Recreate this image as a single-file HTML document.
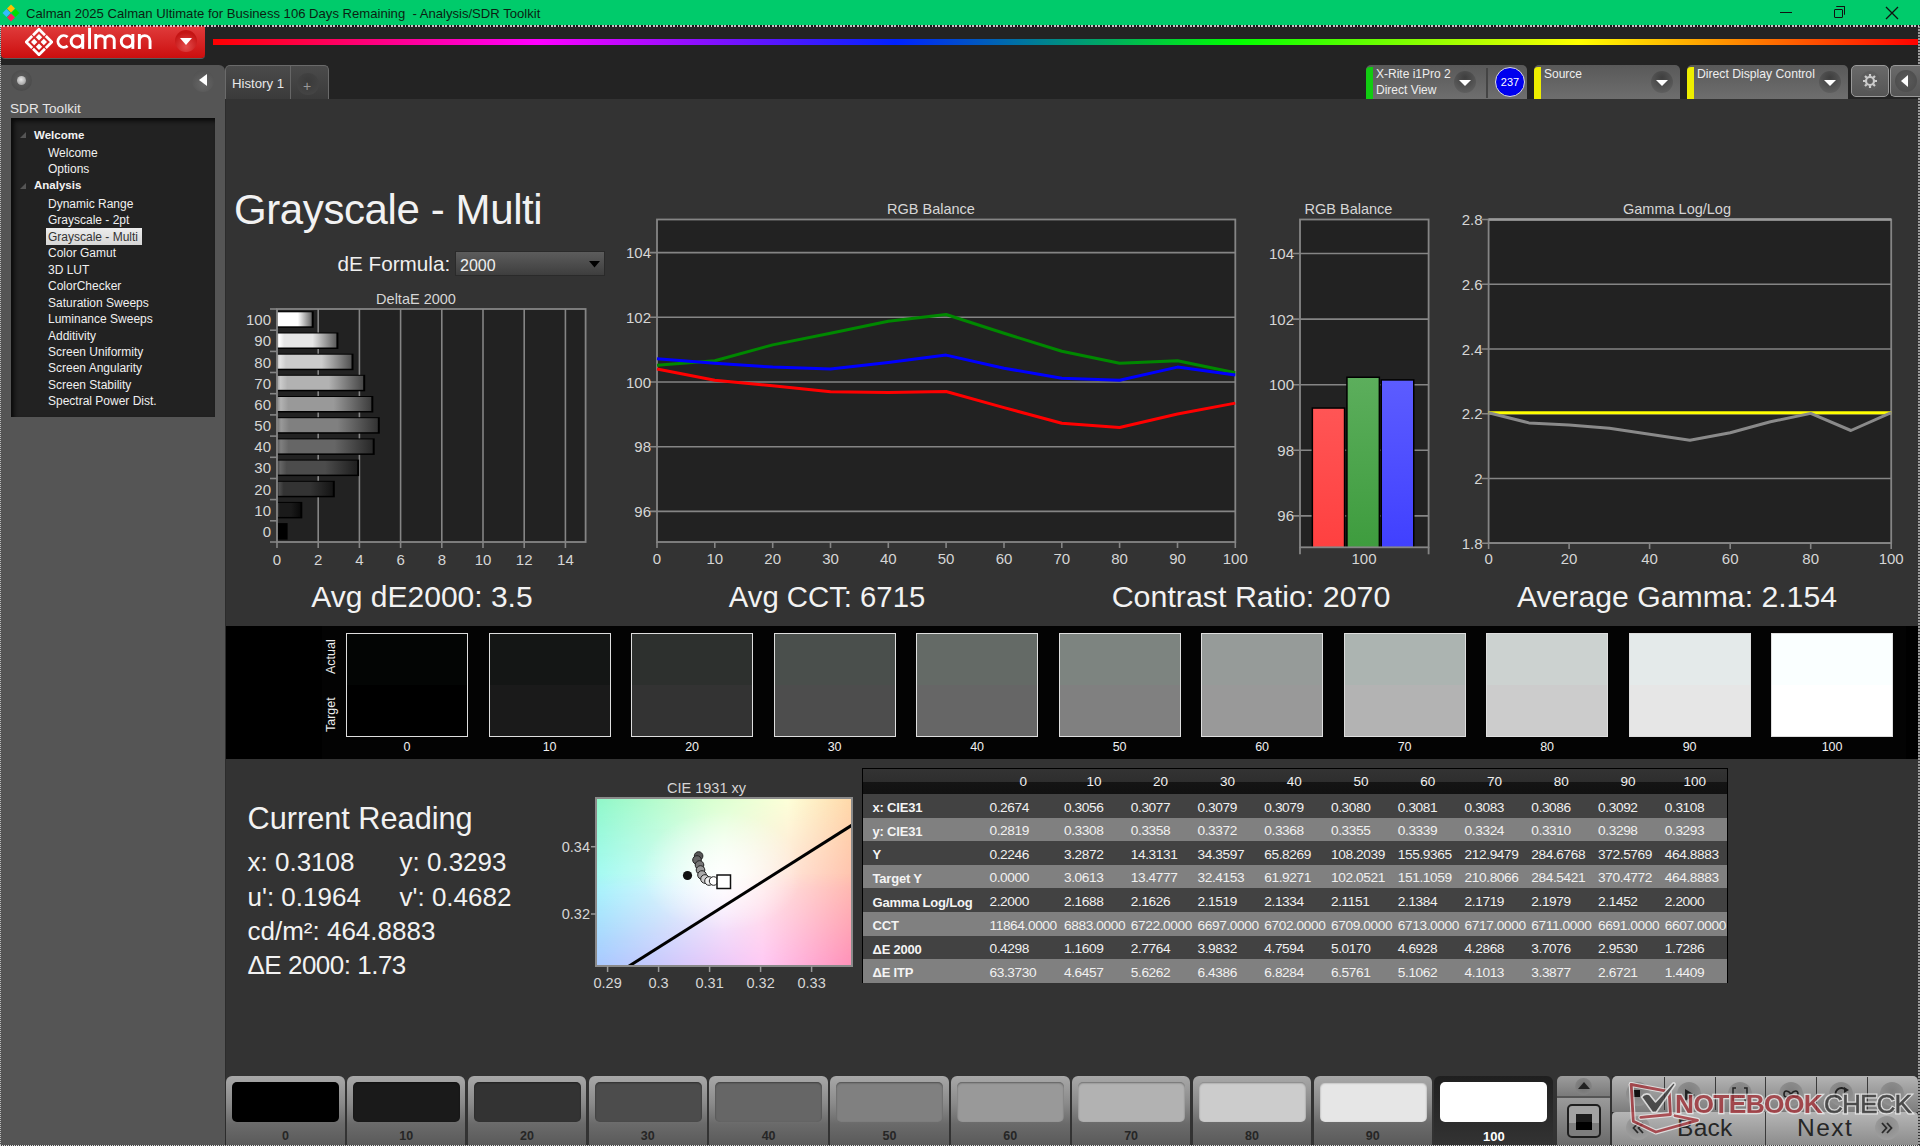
<!DOCTYPE html><html><head><meta charset="utf-8"><title>Calman</title><style>
*{margin:0;padding:0;box-sizing:border-box}
html,body{width:1920px;height:1146px;overflow:hidden;background:#232323;font-family:"Liberation Sans",sans-serif}
.a{position:absolute}
.t{position:absolute;white-space:nowrap;line-height:1}
</style></head><body>
<div class="a" style="left:0;top:0;width:1920px;height:25px;background:#00cb6b"></div>
<svg class="a" style="left:1px;top:3px" width="20" height="20" viewBox="0 0 20 20">
<path d="M10 1.5 L14 5.5 L10 9.5 L6 5.5Z" fill="#ffc000"/>
<path d="M5.5 6 L9.5 10 L5.5 14 L1.5 10Z" fill="#33bbff"/>
<path d="M14.5 6 L18.5 10 L14.5 14 L10.5 10Z" fill="#00dd00"/>
<path d="M10 10.5 L14 14.5 L10 18.5 L6 14.5Z" fill="#ff1f5a"/>
</svg>
<div class="t" style="left:26.0px;top:7.0px;font-size:13.1px;color:#0b1f12;">Calman 2025 Calman Ultimate for Business 106 Days Remaining &nbsp;- Analysis/SDR Toolkit</div>
<div class="a" style="left:1780px;top:12px;width:12px;height:1px;background:#111"></div>
<div class="a" style="left:1834px;top:9px;width:9px;height:9px;border:1px solid #111;border-radius:1px"></div>
<div class="a" style="left:1836px;top:6px;width:9px;height:9px;border-top:1px solid #111;border-right:1px solid #111;border-radius:1px"></div>
<svg class="a" style="left:1885px;top:6px" width="14" height="14"><path d="M1 1L13 13M13 1L1 13" stroke="#111" stroke-width="1.3"/></svg>
<div class="a" style="left:1px;top:26px;width:204px;height:32px;border-radius:0 0 4px 4px;background:linear-gradient(#e03c3c,#cc0e0e);box-shadow:0 1px 0 #5a5a5a"></div>
<svg class="a" style="left:25px;top:28px" width="28" height="28" viewBox="-14 -14 28 28">
<g fill="none" stroke="#fff" stroke-width="2.7" stroke-linejoin="miter">
<path d="M-6 -6.8 L0 -12.8 L6 -6.8"/><path d="M6.8 -6 L12.8 0 L6.8 6"/><path d="M6 6.8 L0 12.8 L-6 6.8"/><path d="M-6.8 6 L-12.8 0 L-6.8 -6"/>
</g>
<g fill="#fff"><path d="M0 -8 L3.2 -4.8 L0 -1.6 L-3.2 -4.8Z"/><path d="M4.8 -3.2 L8 0 L4.8 3.2 L1.6 0Z"/><path d="M0 1.6 L3.2 4.8 L0 8 L-3.2 4.8Z"/><path d="M-4.8 -3.2 L-1.6 0 L-4.8 3.2 L-8 0Z"/></g>
</svg>
<svg class="a" style="left:0;top:0" width="210" height="60"><g fill="none" stroke="#fff" stroke-width="2.9">
<path d="M67.6 37.1 A5.8 5.8 0 1 0 67.6 45.8"/>
<circle cx="76.95" cy="41.45" r="5.8"/><path d="M82.75 34 V48.9"/>
<path d="M89.55 27.8 V48.9"/>
<path d="M95.75 34 V48.9 M95.75 40.3 A4.62 4.62 0 0 1 105 40.3 V48.9 M105 40.3 A4.62 4.62 0 0 1 114.25 40.3 V48.9"/>
<circle cx="127.05" cy="41.45" r="5.8"/><path d="M132.85 34 V48.9"/>
<path d="M139.35 34 V48.9 M139.35 41 A5.35 5.35 0 0 1 150.05 41 V48.9"/>
</g></svg>
<div class="a" style="left:175px;top:30px;width:22px;height:22px;border-radius:50%;background:radial-gradient(circle at 50% 75%,#e44c4c,#c41414 70%)"></div>
<svg class="a" style="left:180px;top:38px" width="12" height="8"><path d="M0 0H12L6 7Z" fill="#fff"/></svg>
<div class="a" style="left:213px;top:39px;width:1707px;height:6px;background:linear-gradient(90deg,#ff0000 0%,#ff00ff 19%,#0022ff 40%,#00ff00 60%,#ffff00 80%,#ff0000 100%)"></div>
<div class="a" style="left:0;top:65px;width:225px;height:1081px;background:#555;border-radius:0 6px 0 0"></div>
<div class="a" style="left:10.5px;top:70px;width:21px;height:21px;border-radius:50%;background:radial-gradient(circle at 50% 45%,#5a5a5a 20%,#4a4a4a 75%,#5c5c5c 100%)"></div>
<div class="a" style="left:16.5px;top:75.5px;width:9px;height:9px;border-radius:50%;background:radial-gradient(circle at 45% 40%,#e8e8e8,#8a8a8a)"></div>
<div class="a" style="left:192px;top:70px;width:22px;height:22px;border-radius:50%;background:radial-gradient(circle at 50% 65%,#666,#4c4c4c)"></div>
<svg class="a" style="left:199px;top:74px" width="10" height="14"><path d="M8 0V12L0 6Z" fill="#fff"/></svg>
<div class="t" style="left:10.0px;top:101.6px;font-size:13.6px;color:#e6e6e6;">SDR Toolkit</div>
<div class="a" style="left:11px;top:118px;width:204px;height:299px;background:#222;box-shadow:inset 3px 3px 4px #0a0a0a"></div>
<svg class="a" style="left:20px;top:132.0px" width="6" height="6"><path d="M6 0V6H0Z" fill="#555"/></svg>
<div class="t" style="left:34.0px;top:129.8px;font-size:11.5px;color:#f2f2f2;font-weight:bold">Welcome</div>
<div class="t" style="left:48.0px;top:146.9px;font-size:12px;color:#f0f0f0;">Welcome</div>
<div class="t" style="left:48.0px;top:163.4px;font-size:12px;color:#f0f0f0;">Options</div>
<svg class="a" style="left:20px;top:182.5px" width="6" height="6"><path d="M6 0V6H0Z" fill="#555"/></svg>
<div class="t" style="left:34.0px;top:180.3px;font-size:11.5px;color:#f2f2f2;font-weight:bold">Analysis</div>
<div class="t" style="left:48.0px;top:197.9px;font-size:12px;color:#f0f0f0;">Dynamic Range</div>
<div class="t" style="left:48.0px;top:214.4px;font-size:12px;color:#f0f0f0;">Grayscale - 2pt</div>
<div class="a" style="left:46px;top:227.8px;width:96px;height:17px;background:linear-gradient(#ededed,#d6d6d6)"></div>
<div class="t" style="left:48.0px;top:230.9px;font-size:12px;color:#333;">Grayscale - Multi</div>
<div class="t" style="left:48.0px;top:247.4px;font-size:12px;color:#f0f0f0;">Color Gamut</div>
<div class="t" style="left:48.0px;top:263.9px;font-size:12px;color:#f0f0f0;">3D LUT</div>
<div class="t" style="left:48.0px;top:280.4px;font-size:12px;color:#f0f0f0;">ColorChecker</div>
<div class="t" style="left:48.0px;top:296.9px;font-size:12px;color:#f0f0f0;">Saturation Sweeps</div>
<div class="t" style="left:48.0px;top:313.4px;font-size:12px;color:#f0f0f0;">Luminance Sweeps</div>
<div class="t" style="left:48.0px;top:329.9px;font-size:12px;color:#f0f0f0;">Additivity</div>
<div class="t" style="left:48.0px;top:346.4px;font-size:12px;color:#f0f0f0;">Screen Uniformity</div>
<div class="t" style="left:48.0px;top:362.4px;font-size:12px;color:#f0f0f0;">Screen Angularity</div>
<div class="t" style="left:48.0px;top:378.9px;font-size:12px;color:#f0f0f0;">Screen Stability</div>
<div class="t" style="left:48.0px;top:395.4px;font-size:12px;color:#f0f0f0;">Spectral Power Dist.</div>
<div class="a" style="left:225px;top:65px;width:104px;height:34px;border-radius:5px 5px 0 0;background:linear-gradient(#4b4b4b,#3a3a3a);border:1px solid #6a6a6a;border-bottom:none"></div>
<div class="a" style="left:290px;top:66px;width:1px;height:33px;background:#666"></div>
<div class="t" style="left:232.0px;top:76.9px;font-size:13.2px;color:#e8e8e8;">History 1</div>
<div class="a" style="left:297px;top:73px;width:22px;height:22px;border-radius:50%;background:radial-gradient(circle at 50% 40%,#3a3a3a,#474747)"></div>
<div class="t" style="left:303.0px;top:79.2px;font-size:14px;color:#999;">+</div>
<div class="a" style="left:225px;top:99px;width:1px;height:1047px;background:#2c2c2c"></div>
<div class="a" style="left:226px;top:99px;width:1692px;height:1046px;background:#333"></div>
<div class="a" style="left:1918px;top:26px;width:2px;height:1120px;background:repeating-linear-gradient(#9a9a9a 0 2px,#333 2px 3px)"></div>
<div class="a" style="left:0;top:26px;width:1px;height:1120px;background:repeating-linear-gradient(#bbb 0 1px,#555 1px 2px)"></div>
<div class="a" style="left:1366px;top:65px;width:161px;height:34px;border-radius:5px 5px 0 0;background:linear-gradient(#595959,#6e6e6e)"></div>
<div class="a" style="left:1366px;top:67px;width:6.5px;height:32px;border-radius:4px 0 0 0;background:#11cc11"></div>
<div class="t" style="left:1376.0px;top:68.4px;font-size:12px;color:#eee;">X-Rite i1Pro 2</div>
<div class="t" style="left:1376.0px;top:84.4px;font-size:12px;color:#eee;">Direct View</div>
<div class="a" style="left:1454px;top:71px;width:22px;height:22px;border-radius:50%;background:radial-gradient(circle at 50% 30%,#3e3e3e,#666)"></div>
<svg class="a" style="left:1459px;top:80px" width="12" height="7"><path d="M0 0H12L6 6Z" fill="#fff"/></svg>
<div class="a" style="left:1486px;top:68px;width:1.5px;height:30px;background:#444"></div>
<div class="a" style="left:1495px;top:67px;width:30px;height:30px;border-radius:50%;background:#0000ee;border:1.5px solid #ddd"></div>
<div class="t" style="left:1498.0px;width:24px;text-align:center;top:76.8px;font-size:11px;color:#fff;">237</div>
<div class="a" style="left:1534px;top:65px;width:146px;height:34px;border-radius:5px 5px 0 0;background:linear-gradient(#595959,#6e6e6e)"></div>
<div class="a" style="left:1534px;top:67px;width:6.5px;height:32px;border-radius:4px 0 0 0;background:#eeee00"></div>
<div class="t" style="left:1544.0px;top:68.4px;font-size:12px;color:#eee;">Source</div>
<div class="a" style="left:1651px;top:71px;width:22px;height:22px;border-radius:50%;background:radial-gradient(circle at 50% 30%,#3e3e3e,#666)"></div>
<svg class="a" style="left:1656px;top:80px" width="12" height="7"><path d="M0 0H12L6 6Z" fill="#fff"/></svg>
<div class="a" style="left:1687px;top:65px;width:161px;height:34px;border-radius:5px 5px 0 0;background:linear-gradient(#595959,#6e6e6e)"></div>
<div class="a" style="left:1687px;top:67px;width:6.5px;height:32px;border-radius:4px 0 0 0;background:#eeee00"></div>
<div class="t" style="left:1697.0px;top:68.3px;font-size:12.2px;color:#eee;">Direct Display Control</div>
<div class="a" style="left:1819px;top:71px;width:22px;height:22px;border-radius:50%;background:radial-gradient(circle at 50% 30%,#3e3e3e,#666)"></div>
<svg class="a" style="left:1824px;top:80px" width="12" height="7"><path d="M0 0H12L6 6Z" fill="#fff"/></svg>
<div class="a" style="left:1851px;top:65px;width:38px;height:32px;border-radius:5px;background:linear-gradient(#6a6a6a,#555);border:1px solid #999"></div>
<svg class="a" style="left:1859px;top:70px" width="22" height="22" viewBox="0 0 22 22"><circle cx="11" cy="11" r="10" fill="#5e5e5e"/><g stroke="#ccc" stroke-width="2.2" fill="none"><circle cx="11" cy="11" r="4"/><path d="M11 4v2.5M11 15.5V18M4 11h2.5M15.5 11H18M6 6l1.8 1.8M14.2 14.2L16 16M16 6l-1.8 1.8M7.8 14.2L6 16"/></g></svg>
<div class="a" style="left:1890px;top:65px;width:30px;height:32px;border-radius:5px 0 0 5px;background:linear-gradient(#6a6a6a,#555);border:1px solid #999;border-right:none"></div>
<div class="a" style="left:1895px;top:70px;width:22px;height:22px;border-radius:50%;background:radial-gradient(#5a5a5a,#4a4a4a)"></div>
<svg class="a" style="left:1901px;top:75px" width="8" height="12"><path d="M7 0V12L0 6Z" fill="#fff"/></svg>
<div class="t" style="left:234.0px;top:188.7px;font-size:42px;color:#f2f2f2;letter-spacing:-0.4px">Grayscale - Multi</div>
<div class="t" style="left:337.5px;top:253.6px;font-size:20.7px;color:#f0f0f0;">dE Formula:</div>
<div class="a" style="left:455px;top:251px;width:150px;height:25px;background:linear-gradient(#5c5c5c,#3e3e3e);border:1px solid #2a2a2a"></div>
<div class="t" style="left:460.0px;top:257.6px;font-size:16px;color:#eee;">2000</div>
<svg class="a" style="left:589px;top:261px" width="12" height="7"><path d="M0 0H11L5.5 6.5Z" fill="#000"/></svg>
<svg class="a" style="left:0;top:0" width="1920" height="1146" font-family="Liberation Sans, sans-serif"><defs><linearGradient id="dg0" x1="0" x2="1" y1="0" y2="0"><stop offset="0" stop-color="rgb(0,0,0)"/><stop offset="0.04" stop-color="rgb(25,25,25)"/><stop offset="0.12" stop-color="rgb(0,0,0)"/><stop offset="0.6" stop-color="rgb(0,0,0)"/><stop offset="1" stop-color="rgb(0,0,0)"/></linearGradient><linearGradient id="dg1" x1="0" x2="1" y1="0" y2="0"><stop offset="0" stop-color="rgb(6,6,6)"/><stop offset="0.04" stop-color="rgb(51,51,51)"/><stop offset="0.12" stop-color="rgb(26,26,26)"/><stop offset="0.6" stop-color="rgb(26,26,26)"/><stop offset="1" stop-color="rgb(10,10,10)"/></linearGradient><linearGradient id="dg2" x1="0" x2="1" y1="0" y2="0"><stop offset="0" stop-color="rgb(31,31,31)"/><stop offset="0.04" stop-color="rgb(76,76,76)"/><stop offset="0.12" stop-color="rgb(51,51,51)"/><stop offset="0.6" stop-color="rgb(51,51,51)"/><stop offset="1" stop-color="rgb(20,20,20)"/></linearGradient><linearGradient id="dg3" x1="0" x2="1" y1="0" y2="0"><stop offset="0" stop-color="rgb(56,56,56)"/><stop offset="0.04" stop-color="rgb(101,101,101)"/><stop offset="0.12" stop-color="rgb(76,76,76)"/><stop offset="0.6" stop-color="rgb(76,76,76)"/><stop offset="1" stop-color="rgb(30,30,30)"/></linearGradient><linearGradient id="dg4" x1="0" x2="1" y1="0" y2="0"><stop offset="0" stop-color="rgb(82,82,82)"/><stop offset="0.04" stop-color="rgb(127,127,127)"/><stop offset="0.12" stop-color="rgb(102,102,102)"/><stop offset="0.6" stop-color="rgb(102,102,102)"/><stop offset="1" stop-color="rgb(40,40,40)"/></linearGradient><linearGradient id="dg5" x1="0" x2="1" y1="0" y2="0"><stop offset="0" stop-color="rgb(108,108,108)"/><stop offset="0.04" stop-color="rgb(153,153,153)"/><stop offset="0.12" stop-color="rgb(128,128,128)"/><stop offset="0.6" stop-color="rgb(128,128,128)"/><stop offset="1" stop-color="rgb(51,51,51)"/></linearGradient><linearGradient id="dg6" x1="0" x2="1" y1="0" y2="0"><stop offset="0" stop-color="rgb(133,133,133)"/><stop offset="0.04" stop-color="rgb(178,178,178)"/><stop offset="0.12" stop-color="rgb(153,153,153)"/><stop offset="0.6" stop-color="rgb(153,153,153)"/><stop offset="1" stop-color="rgb(61,61,61)"/></linearGradient><linearGradient id="dg7" x1="0" x2="1" y1="0" y2="0"><stop offset="0" stop-color="rgb(158,158,158)"/><stop offset="0.04" stop-color="rgb(203,203,203)"/><stop offset="0.12" stop-color="rgb(178,178,178)"/><stop offset="0.6" stop-color="rgb(178,178,178)"/><stop offset="1" stop-color="rgb(71,71,71)"/></linearGradient><linearGradient id="dg8" x1="0" x2="1" y1="0" y2="0"><stop offset="0" stop-color="rgb(184,184,184)"/><stop offset="0.04" stop-color="rgb(229,229,229)"/><stop offset="0.12" stop-color="rgb(204,204,204)"/><stop offset="0.6" stop-color="rgb(204,204,204)"/><stop offset="1" stop-color="rgb(81,81,81)"/></linearGradient><linearGradient id="dg9" x1="0" x2="1" y1="0" y2="0"><stop offset="0" stop-color="rgb(210,210,210)"/><stop offset="0.04" stop-color="rgb(255,255,255)"/><stop offset="0.12" stop-color="rgb(230,230,230)"/><stop offset="0.6" stop-color="rgb(230,230,230)"/><stop offset="1" stop-color="rgb(92,92,92)"/></linearGradient><linearGradient id="dg10" x1="0" x2="1" y1="0" y2="0"><stop offset="0" stop-color="rgb(235,235,235)"/><stop offset="0.04" stop-color="rgb(255,255,255)"/><stop offset="0.12" stop-color="rgb(255,255,255)"/><stop offset="0.6" stop-color="rgb(255,255,255)"/><stop offset="1" stop-color="rgb(102,102,102)"/></linearGradient><linearGradient id="rbR" x1="0" x2="0" y1="0" y2="1"><stop offset="0" stop-color="#ff5555"/><stop offset="1" stop-color="#ff4040"/></linearGradient><linearGradient id="rbG" x1="0" x2="0" y1="0" y2="1"><stop offset="0" stop-color="#5cae5c"/><stop offset="1" stop-color="#3e9c3e"/></linearGradient><linearGradient id="rbB" x1="0" x2="0" y1="0" y2="1"><stop offset="0" stop-color="#5c5cff"/><stop offset="1" stop-color="#4040ff"/></linearGradient></defs><rect x="277" y="309" width="308.6" height="233" fill="#222"/><line x1="318.2" y1="309" x2="318.2" y2="548" stroke="#858585" stroke-width="1.6"/><line x1="359.4" y1="309" x2="359.4" y2="548" stroke="#858585" stroke-width="1.6"/><line x1="400.6" y1="309" x2="400.6" y2="548" stroke="#858585" stroke-width="1.6"/><line x1="441.8" y1="309" x2="441.8" y2="548" stroke="#858585" stroke-width="1.6"/><line x1="483.0" y1="309" x2="483.0" y2="548" stroke="#858585" stroke-width="1.6"/><line x1="524.2" y1="309" x2="524.2" y2="548" stroke="#858585" stroke-width="1.6"/><line x1="565.4" y1="309" x2="565.4" y2="548" stroke="#858585" stroke-width="1.6"/><line x1="277" y1="548" x2="277" y2="542" stroke="#858585" stroke-width="1.6"/><text x="277.0" y="565.0" font-size="15" text-anchor="middle" fill="#d6d6d6" >0</text><text x="318.2" y="565.0" font-size="15" text-anchor="middle" fill="#d6d6d6" >2</text><text x="359.4" y="565.0" font-size="15" text-anchor="middle" fill="#d6d6d6" >4</text><text x="400.6" y="565.0" font-size="15" text-anchor="middle" fill="#d6d6d6" >6</text><text x="441.8" y="565.0" font-size="15" text-anchor="middle" fill="#d6d6d6" >8</text><text x="483.0" y="565.0" font-size="15" text-anchor="middle" fill="#d6d6d6" >10</text><text x="524.2" y="565.0" font-size="15" text-anchor="middle" fill="#d6d6d6" >12</text><text x="565.4" y="565.0" font-size="15" text-anchor="middle" fill="#d6d6d6" >14</text><rect x="277" y="523.1" width="10.6" height="16.5" fill="#000"/><rect x="277" y="524.1" width="8.6" height="14.0" fill="url(#dg0)"/><rect x="277" y="501.9" width="25.3" height="16.5" fill="#000"/><rect x="277" y="502.9" width="23.3" height="14.0" fill="url(#dg1)"/><rect x="277" y="480.8" width="57.8" height="16.5" fill="#000"/><rect x="277" y="481.8" width="55.8" height="14.0" fill="url(#dg2)"/><rect x="277" y="459.6" width="82.1" height="16.5" fill="#000"/><rect x="277" y="460.6" width="80.1" height="14.0" fill="url(#dg3)"/><rect x="277" y="438.4" width="97.7" height="16.5" fill="#000"/><rect x="277" y="439.4" width="95.7" height="14.0" fill="url(#dg4)"/><rect x="277" y="417.2" width="102.8" height="16.5" fill="#000"/><rect x="277" y="418.2" width="100.8" height="14.0" fill="url(#dg5)"/><rect x="277" y="396.0" width="96.3" height="16.5" fill="#000"/><rect x="277" y="397.0" width="94.3" height="14.0" fill="url(#dg6)"/><rect x="277" y="374.8" width="88.2" height="16.5" fill="#000"/><rect x="277" y="375.8" width="86.2" height="14.0" fill="url(#dg7)"/><rect x="277" y="353.7" width="76.5" height="16.5" fill="#000"/><rect x="277" y="354.7" width="74.5" height="14.0" fill="url(#dg8)"/><rect x="277" y="332.5" width="61.4" height="16.5" fill="#000"/><rect x="277" y="333.5" width="59.4" height="14.0" fill="url(#dg9)"/><rect x="277" y="311.3" width="36.7" height="16.5" fill="#000"/><rect x="277" y="312.3" width="34.7" height="14.0" fill="url(#dg10)"/><line x1="270" y1="309.0" x2="277" y2="309.0" stroke="#858585" stroke-width="1.6"/><line x1="270" y1="330.2" x2="277" y2="330.2" stroke="#858585" stroke-width="1.6"/><line x1="270" y1="351.4" x2="277" y2="351.4" stroke="#858585" stroke-width="1.6"/><line x1="270" y1="372.5" x2="277" y2="372.5" stroke="#858585" stroke-width="1.6"/><line x1="270" y1="393.7" x2="277" y2="393.7" stroke="#858585" stroke-width="1.6"/><line x1="270" y1="414.9" x2="277" y2="414.9" stroke="#858585" stroke-width="1.6"/><line x1="270" y1="436.1" x2="277" y2="436.1" stroke="#858585" stroke-width="1.6"/><line x1="270" y1="457.3" x2="277" y2="457.3" stroke="#858585" stroke-width="1.6"/><line x1="270" y1="478.5" x2="277" y2="478.5" stroke="#858585" stroke-width="1.6"/><line x1="270" y1="499.6" x2="277" y2="499.6" stroke="#858585" stroke-width="1.6"/><line x1="270" y1="520.8" x2="277" y2="520.8" stroke="#858585" stroke-width="1.6"/><line x1="270" y1="542.0" x2="277" y2="542.0" stroke="#858585" stroke-width="1.6"/><text x="271.0" y="536.9" font-size="15" text-anchor="end" fill="#d6d6d6" >0</text><text x="271.0" y="515.7" font-size="15" text-anchor="end" fill="#d6d6d6" >10</text><text x="271.0" y="494.5" font-size="15" text-anchor="end" fill="#d6d6d6" >20</text><text x="271.0" y="473.4" font-size="15" text-anchor="end" fill="#d6d6d6" >30</text><text x="271.0" y="452.2" font-size="15" text-anchor="end" fill="#d6d6d6" >40</text><text x="271.0" y="431.0" font-size="15" text-anchor="end" fill="#d6d6d6" >50</text><text x="271.0" y="409.8" font-size="15" text-anchor="end" fill="#d6d6d6" >60</text><text x="271.0" y="388.6" font-size="15" text-anchor="end" fill="#d6d6d6" >70</text><text x="271.0" y="367.5" font-size="15" text-anchor="end" fill="#d6d6d6" >80</text><text x="271.0" y="346.3" font-size="15" text-anchor="end" fill="#d6d6d6" >90</text><text x="271.0" y="325.1" font-size="15" text-anchor="end" fill="#d6d6d6" >100</text><rect x="277" y="309" width="308.6" height="233" fill="none" stroke="#858585" stroke-width="1.8"/><text x="416.0" y="303.5" font-size="14.5" text-anchor="middle" fill="#d6d6d6" >DeltaE 2000</text><rect x="657" y="219.5" width="578.3" height="322.5" fill="#222"/><line x1="650" y1="511.4" x2="1235.3" y2="511.4" stroke="#858585" stroke-width="1.6"/><text x="651.0" y="516.9" font-size="15" text-anchor="end" fill="#d6d6d6" >96</text><line x1="650" y1="446.7" x2="1235.3" y2="446.7" stroke="#858585" stroke-width="1.6"/><text x="651.0" y="452.2" font-size="15" text-anchor="end" fill="#d6d6d6" >98</text><line x1="650" y1="382.0" x2="1235.3" y2="382.0" stroke="#858585" stroke-width="1.6"/><text x="651.0" y="387.5" font-size="15" text-anchor="end" fill="#d6d6d6" >100</text><line x1="650" y1="317.3" x2="1235.3" y2="317.3" stroke="#858585" stroke-width="1.6"/><text x="651.0" y="322.8" font-size="15" text-anchor="end" fill="#d6d6d6" >102</text><line x1="650" y1="252.6" x2="1235.3" y2="252.6" stroke="#858585" stroke-width="1.6"/><text x="651.0" y="258.1" font-size="15" text-anchor="end" fill="#d6d6d6" >104</text><line x1="657.0" y1="542" x2="657.0" y2="548" stroke="#858585" stroke-width="1.6"/><text x="657.0" y="564.0" font-size="15" text-anchor="middle" fill="#d6d6d6" >0</text><line x1="714.8" y1="542" x2="714.8" y2="548" stroke="#858585" stroke-width="1.6"/><text x="714.8" y="564.0" font-size="15" text-anchor="middle" fill="#d6d6d6" >10</text><line x1="772.7" y1="542" x2="772.7" y2="548" stroke="#858585" stroke-width="1.6"/><text x="772.7" y="564.0" font-size="15" text-anchor="middle" fill="#d6d6d6" >20</text><line x1="830.5" y1="542" x2="830.5" y2="548" stroke="#858585" stroke-width="1.6"/><text x="830.5" y="564.0" font-size="15" text-anchor="middle" fill="#d6d6d6" >30</text><line x1="888.3" y1="542" x2="888.3" y2="548" stroke="#858585" stroke-width="1.6"/><text x="888.3" y="564.0" font-size="15" text-anchor="middle" fill="#d6d6d6" >40</text><line x1="946.1" y1="542" x2="946.1" y2="548" stroke="#858585" stroke-width="1.6"/><text x="946.1" y="564.0" font-size="15" text-anchor="middle" fill="#d6d6d6" >50</text><line x1="1004.0" y1="542" x2="1004.0" y2="548" stroke="#858585" stroke-width="1.6"/><text x="1004.0" y="564.0" font-size="15" text-anchor="middle" fill="#d6d6d6" >60</text><line x1="1061.8" y1="542" x2="1061.8" y2="548" stroke="#858585" stroke-width="1.6"/><text x="1061.8" y="564.0" font-size="15" text-anchor="middle" fill="#d6d6d6" >70</text><line x1="1119.6" y1="542" x2="1119.6" y2="548" stroke="#858585" stroke-width="1.6"/><text x="1119.6" y="564.0" font-size="15" text-anchor="middle" fill="#d6d6d6" >80</text><line x1="1177.5" y1="542" x2="1177.5" y2="548" stroke="#858585" stroke-width="1.6"/><text x="1177.5" y="564.0" font-size="15" text-anchor="middle" fill="#d6d6d6" >90</text><line x1="1235.3" y1="542" x2="1235.3" y2="548" stroke="#858585" stroke-width="1.6"/><text x="1235.3" y="564.0" font-size="15" text-anchor="middle" fill="#d6d6d6" >100</text><rect x="657" y="219.5" width="578.3" height="322.5" fill="none" stroke="#858585" stroke-width="1.8"/><polyline points="657.0,369.0 714.8,380.2 772.7,385.8 830.5,391.8 888.3,392.6 946.1,391.5 1004.0,407.6 1061.8,423.3 1119.6,427.5 1177.5,414.0 1235.3,403.1" fill="none" stroke="#ff0000" stroke-width="3" stroke-linejoin="round"/><polyline points="657.0,365.2 714.8,360.7 772.7,344.9 830.5,333.3 888.3,321.3 946.1,314.5 1004.0,333.3 1061.8,351.3 1119.6,363.3 1177.5,360.7 1235.3,372.7" fill="none" stroke="#008800" stroke-width="3" stroke-linejoin="round"/><polyline points="657.0,358.8 714.8,363.3 772.7,367.1 830.5,369.0 888.3,362.6 946.1,355.1 1004.0,368.2 1061.8,378.3 1119.6,380.2 1177.5,367.1 1235.3,375.0" fill="none" stroke="#0000ff" stroke-width="3" stroke-linejoin="round"/><text x="931.0" y="213.5" font-size="14.5" text-anchor="middle" fill="#d6d6d6" >RGB Balance</text><rect x="1300" y="219.5" width="128.5999999999999" height="327.79999999999995" fill="#222"/><line x1="1293" y1="515.9" x2="1428.6" y2="515.9" stroke="#858585" stroke-width="1.6"/><text x="1294.0" y="521.4" font-size="15" text-anchor="end" fill="#d6d6d6" >96</text><line x1="1293" y1="450.3" x2="1428.6" y2="450.3" stroke="#858585" stroke-width="1.6"/><text x="1294.0" y="455.8" font-size="15" text-anchor="end" fill="#d6d6d6" >98</text><line x1="1293" y1="384.7" x2="1428.6" y2="384.7" stroke="#858585" stroke-width="1.6"/><text x="1294.0" y="390.2" font-size="15" text-anchor="end" fill="#d6d6d6" >100</text><line x1="1293" y1="319.1" x2="1428.6" y2="319.1" stroke="#858585" stroke-width="1.6"/><text x="1294.0" y="324.6" font-size="15" text-anchor="end" fill="#d6d6d6" >102</text><line x1="1293" y1="253.5" x2="1428.6" y2="253.5" stroke="#858585" stroke-width="1.6"/><text x="1294.0" y="259.0" font-size="15" text-anchor="end" fill="#d6d6d6" >104</text><rect x="1311.6" y="407.3" width="33.7" height="140.0" fill="#000"/><rect x="1313.1" y="408.8" width="30.7" height="138.5" fill="url(#rbR)"/><rect x="1346.2" y="376.5" width="33.9" height="170.8" fill="#000"/><rect x="1347.7" y="378.0" width="30.9" height="169.3" fill="url(#rbG)"/><rect x="1380.5" y="379.2" width="34.0" height="168.1" fill="#000"/><rect x="1382.0" y="380.7" width="31.0" height="166.6" fill="url(#rbB)"/><rect x="1300" y="219.5" width="128.5999999999999" height="327.79999999999995" fill="none" stroke="#858585" stroke-width="1.8"/><line x1="1300" y1="547.3" x2="1300" y2="554.3" stroke="#858585" stroke-width="1.8"/><line x1="1428.6" y1="547.3" x2="1428.6" y2="554.3" stroke="#858585" stroke-width="1.8"/><text x="1364.0" y="564.0" font-size="15" text-anchor="middle" fill="#d6d6d6" >100</text><text x="1348.5" y="213.5" font-size="14.5" text-anchor="middle" fill="#d6d6d6" >RGB Balance</text><rect x="1488.6" y="219.5" width="402.60000000000014" height="323.5" fill="#222"/><line x1="1481.6" y1="543.2" x2="1891.2" y2="543.2" stroke="#858585" stroke-width="1.6"/><text x="1482.6" y="548.8" font-size="15" text-anchor="end" fill="#d6d6d6" >1.8</text><line x1="1481.6" y1="478.5" x2="1891.2" y2="478.5" stroke="#858585" stroke-width="1.6"/><text x="1482.6" y="484.0" font-size="15" text-anchor="end" fill="#d6d6d6" >2</text><line x1="1481.6" y1="413.7" x2="1891.2" y2="413.7" stroke="#858585" stroke-width="1.6"/><text x="1482.6" y="419.2" font-size="15" text-anchor="end" fill="#d6d6d6" >2.2</text><line x1="1481.6" y1="349.0" x2="1891.2" y2="349.0" stroke="#858585" stroke-width="1.6"/><text x="1482.6" y="354.5" font-size="15" text-anchor="end" fill="#d6d6d6" >2.4</text><line x1="1481.6" y1="284.2" x2="1891.2" y2="284.2" stroke="#858585" stroke-width="1.6"/><text x="1482.6" y="289.7" font-size="15" text-anchor="end" fill="#d6d6d6" >2.6</text><line x1="1481.6" y1="219.5" x2="1891.2" y2="219.5" stroke="#858585" stroke-width="1.6"/><text x="1482.6" y="225.0" font-size="15" text-anchor="end" fill="#d6d6d6" >2.8</text><line x1="1488.6" y1="543" x2="1488.6" y2="549" stroke="#858585" stroke-width="1.6"/><text x="1488.6" y="564.0" font-size="15" text-anchor="middle" fill="#d6d6d6" >0</text><line x1="1569.1" y1="543" x2="1569.1" y2="549" stroke="#858585" stroke-width="1.6"/><text x="1569.1" y="564.0" font-size="15" text-anchor="middle" fill="#d6d6d6" >20</text><line x1="1649.6" y1="543" x2="1649.6" y2="549" stroke="#858585" stroke-width="1.6"/><text x="1649.6" y="564.0" font-size="15" text-anchor="middle" fill="#d6d6d6" >40</text><line x1="1730.2" y1="543" x2="1730.2" y2="549" stroke="#858585" stroke-width="1.6"/><text x="1730.2" y="564.0" font-size="15" text-anchor="middle" fill="#d6d6d6" >60</text><line x1="1810.7" y1="543" x2="1810.7" y2="549" stroke="#858585" stroke-width="1.6"/><text x="1810.7" y="564.0" font-size="15" text-anchor="middle" fill="#d6d6d6" >80</text><line x1="1891.2" y1="543" x2="1891.2" y2="549" stroke="#858585" stroke-width="1.6"/><text x="1891.2" y="564.0" font-size="15" text-anchor="middle" fill="#d6d6d6" >100</text><rect x="1488.6" y="219.5" width="402.60000000000014" height="323.5" fill="none" stroke="#858585" stroke-width="1.8"/><line x1="1488.6" y1="219.5" x2="1891.2" y2="219.5" stroke="#9a9a9a" stroke-width="2.5"/><line x1="1488.6" y1="412.7" x2="1891.2" y2="412.7" stroke="#ffff00" stroke-width="3"/><polyline points="1488.6,412.7 1528.9,422.9 1569.1,424.9 1609.4,428.3 1649.6,434.3 1689.9,440.2 1730.2,432.7 1770.4,421.8 1810.7,413.4 1850.9,430.5 1891.2,412.7" fill="none" stroke="#8a8a8a" stroke-width="3" stroke-linejoin="round"/><text x="1677.0" y="213.5" font-size="14.5" text-anchor="middle" fill="#d6d6d6" >Gamma Log/Log</text><text x="422.0" y="607.0" font-size="30" text-anchor="middle" fill="#f2f2f2" >Avg dE2000: 3.5</text><text x="827.0" y="607.0" font-size="29.3" text-anchor="middle" fill="#f2f2f2" >Avg CCT: 6715</text><text x="1251.0" y="607.0" font-size="30.4" text-anchor="middle" fill="#f2f2f2" >Contrast Ratio: 2070</text><text x="1677.0" y="607.0" font-size="30.2" text-anchor="middle" fill="#f2f2f2" >Average Gamma: 2.154</text></svg>
<div class="a" style="left:226px;top:626px;width:1692px;height:133px;background:#000"></div>
<div class="a" style="left:322px;top:626px;width:1584px;height:133px;background:#030303"></div>
<div class="t" style="left:325px;top:674px;font-size:12.5px;color:#eee;transform:rotate(-90deg);transform-origin:0 0">Actual</div>
<div class="t" style="left:325px;top:732px;font-size:12.5px;color:#eee;transform:rotate(-90deg);transform-origin:0 0">Target</div>
<div class="a" style="left:346.1px;top:632.5px;width:122px;height:104px;border:1.6px solid #dedede;background:linear-gradient(rgb(3,5,4) 50%,rgb(0,0,0) 50%)"></div>
<div class="t" style="left:327.1px;width:160px;text-align:center;top:741.0px;font-size:12.5px;color:#f0f0f0;">0</div>
<div class="a" style="left:488.6px;top:632.5px;width:122px;height:104px;border:1.6px solid #dedede;background:linear-gradient(rgb(20,22,21) 50%,rgb(26,26,26) 50%)"></div>
<div class="t" style="left:469.6px;width:160px;text-align:center;top:741.0px;font-size:12.5px;color:#f0f0f0;">10</div>
<div class="a" style="left:631.1px;top:632.5px;width:122px;height:104px;border:1.6px solid #dedede;background:linear-gradient(rgb(45,48,46) 50%,rgb(51,51,51) 50%)"></div>
<div class="t" style="left:612.1px;width:160px;text-align:center;top:741.0px;font-size:12.5px;color:#f0f0f0;">20</div>
<div class="a" style="left:773.6px;top:632.5px;width:122px;height:104px;border:1.6px solid #dedede;background:linear-gradient(rgb(74,79,76) 50%,rgb(77,77,77) 50%)"></div>
<div class="t" style="left:754.6px;width:160px;text-align:center;top:741.0px;font-size:12.5px;color:#f0f0f0;">30</div>
<div class="a" style="left:916.1px;top:632.5px;width:122px;height:104px;border:1.6px solid #dedede;background:linear-gradient(rgb(100,106,102) 50%,rgb(102,102,102) 50%)"></div>
<div class="t" style="left:897.1px;width:160px;text-align:center;top:741.0px;font-size:12.5px;color:#f0f0f0;">40</div>
<div class="a" style="left:1058.6px;top:632.5px;width:122px;height:104px;border:1.6px solid #dedede;background:linear-gradient(rgb(125,132,128) 50%,rgb(128,128,128) 50%)"></div>
<div class="t" style="left:1039.6px;width:160px;text-align:center;top:741.0px;font-size:12.5px;color:#f0f0f0;">50</div>
<div class="a" style="left:1201.1px;top:632.5px;width:122px;height:104px;border:1.6px solid #dedede;background:linear-gradient(rgb(150,155,153) 50%,rgb(153,153,153) 50%)"></div>
<div class="t" style="left:1182.1px;width:160px;text-align:center;top:741.0px;font-size:12.5px;color:#f0f0f0;">60</div>
<div class="a" style="left:1343.6px;top:632.5px;width:122px;height:104px;border:1.6px solid #dedede;background:linear-gradient(rgb(172,180,177) 50%,rgb(179,179,179) 50%)"></div>
<div class="t" style="left:1324.6px;width:160px;text-align:center;top:741.0px;font-size:12.5px;color:#f0f0f0;">70</div>
<div class="a" style="left:1486.1px;top:632.5px;width:122px;height:104px;border:1.6px solid #dedede;background:linear-gradient(rgb(204,210,208) 50%,rgb(204,204,204) 50%)"></div>
<div class="t" style="left:1467.1px;width:160px;text-align:center;top:741.0px;font-size:12.5px;color:#f0f0f0;">80</div>
<div class="a" style="left:1628.6px;top:632.5px;width:122px;height:104px;border:1.6px solid #dedede;background:linear-gradient(rgb(228,234,234) 50%,rgb(230,230,230) 50%)"></div>
<div class="t" style="left:1609.6px;width:160px;text-align:center;top:741.0px;font-size:12.5px;color:#f0f0f0;">90</div>
<div class="a" style="left:1771.1px;top:632.5px;width:122px;height:104px;border:1.6px solid #dedede;background:linear-gradient(rgb(250,255,255) 50%,rgb(255,255,255) 50%)"></div>
<div class="t" style="left:1752.1px;width:160px;text-align:center;top:741.0px;font-size:12.5px;color:#f0f0f0;">100</div>
<div class="t" style="left:247.5px;top:803.7px;font-size:30.7px;color:#f2f2f2;">Current Reading</div>
<div class="t" style="left:247.5px;top:849.3px;font-size:26px;color:#f2f2f2;">x: 0.3108</div>
<div class="t" style="left:399.5px;top:849.3px;font-size:26px;color:#f2f2f2;">y: 0.3293</div>
<div class="t" style="left:247.5px;top:883.9px;font-size:26px;color:#f2f2f2;">u': 0.1964</div>
<div class="t" style="left:399.5px;top:883.9px;font-size:26px;color:#f2f2f2;">v': 0.4682</div>
<div class="t" style="left:247.5px;top:917.9px;font-size:26px;color:#f2f2f2;">cd/m²: 464.8883</div>
<div class="t" style="left:247.5px;top:952.3px;font-size:26px;color:#f2f2f2;letter-spacing:-0.5px">ΔE 2000: 1.73</div>
<svg class="a" style="left:0;top:0" width="1920" height="1146" font-family="Liberation Sans, sans-serif">
<defs>
<radialGradient id="cw" cx="0.5" cy="0.5" r="0.5"><stop offset="0" stop-color="#fff" stop-opacity="1"/><stop offset="1" stop-color="#fff" stop-opacity="0"/></radialGradient>
<linearGradient id="ctop" x1="0" x2="1" y1="0" y2="0"><stop offset="0" stop-color="#8ff7c8"/><stop offset="0.45" stop-color="#d8ffd0"/><stop offset="0.75" stop-color="#fdffd8"/><stop offset="1" stop-color="#ffd8a8"/></linearGradient>
<linearGradient id="cbot" x1="0" x2="1" y1="0" y2="0"><stop offset="0" stop-color="#a8c8ff"/><stop offset="0.35" stop-color="#d8c8fb"/><stop offset="0.65" stop-color="#ffc8f4"/><stop offset="1" stop-color="#ff90b8"/></linearGradient>
<linearGradient id="cmid" x1="0" x2="1" y1="0" y2="0"><stop offset="0" stop-color="#a8fbfb"/><stop offset="0.5" stop-color="#ffffff"/><stop offset="1" stop-color="#ffc0b0"/></linearGradient>
<mask id="mtop"><rect x="596" y="798" width="256" height="168" fill="url(#mtopg)"/></mask>
<linearGradient id="mtopg" x1="0" x2="0" y1="0" y2="1"><stop offset="0" stop-color="#fff"/><stop offset="0.55" stop-color="#000"/></linearGradient>
<mask id="mbot"><rect x="596" y="798" width="256" height="168" fill="url(#mbotg)"/></mask>
<linearGradient id="mbotg" x1="0" x2="0" y1="0" y2="1"><stop offset="0.45" stop-color="#000"/><stop offset="1" stop-color="#fff"/></linearGradient>
<clipPath id="cclip"><rect x="596" y="798" width="256" height="168"/></clipPath>
</defs>
<rect x="596" y="798" width="256" height="168" fill="url(#cmid)"/>
<rect x="596" y="798" width="256" height="168" fill="url(#ctop)" mask="url(#mtop)"/>
<rect x="596" y="798" width="256" height="168" fill="url(#cbot)" mask="url(#mbot)"/>
<g clip-path="url(#cclip)"><ellipse cx="722" cy="872" rx="80" ry="60" fill="url(#cw)" opacity="0.85"/>
<line x1="626" y1="968" x2="853" y2="824.5" stroke="#000" stroke-width="3"/></g>
<rect x="596" y="798" width="256" height="168" fill="none" stroke="#8a8a8a" stroke-width="2"/>
<circle cx="698.6" cy="856" r="4.3" fill="#555" stroke="#222" stroke-width="1"/><circle cx="697" cy="860" r="4.3" fill="#666" stroke="#222" stroke-width="1"/><circle cx="699.5" cy="865" r="4.3" fill="#777" stroke="#222" stroke-width="1"/><circle cx="700.5" cy="870" r="4.3" fill="#999" stroke="#222" stroke-width="1"/><circle cx="702" cy="875" r="4.3" fill="#aaa" stroke="#222" stroke-width="1"/><circle cx="705" cy="879" r="4.3" fill="#ccc" stroke="#222" stroke-width="1"/><circle cx="709" cy="881" r="4.3" fill="#eee" stroke="#222" stroke-width="1"/><circle cx="713.6" cy="881" r="4.3" fill="#fff" stroke="#222" stroke-width="1"/><circle cx="687.5" cy="875.5" r="4.6" fill="#111"/><rect x="717" y="875" width="13.5" height="13.5" fill="#fff" stroke="#111" stroke-width="1.5"/><line x1="607.6" y1="966" x2="607.6" y2="972" stroke="#999" stroke-width="1.5"/><text x="607.6" y="988" font-size="14.5" text-anchor="middle" fill="#d6d6d6">0.29</text><line x1="658.6" y1="966" x2="658.6" y2="972" stroke="#999" stroke-width="1.5"/><text x="658.6" y="988" font-size="14.5" text-anchor="middle" fill="#d6d6d6">0.3</text><line x1="709.6" y1="966" x2="709.6" y2="972" stroke="#999" stroke-width="1.5"/><text x="709.6" y="988" font-size="14.5" text-anchor="middle" fill="#d6d6d6">0.31</text><line x1="760.6" y1="966" x2="760.6" y2="972" stroke="#999" stroke-width="1.5"/><text x="760.6" y="988" font-size="14.5" text-anchor="middle" fill="#d6d6d6">0.32</text><line x1="811.6" y1="966" x2="811.6" y2="972" stroke="#999" stroke-width="1.5"/><text x="811.6" y="988" font-size="14.5" text-anchor="middle" fill="#d6d6d6">0.33</text><line x1="591" y1="846.7" x2="596" y2="846.7" stroke="#999" stroke-width="1.5"/><text x="590" y="851.9000000000001" font-size="14.5" text-anchor="end" fill="#d6d6d6">0.34</text><line x1="591" y1="914" x2="596" y2="914" stroke="#999" stroke-width="1.5"/><text x="590" y="919.2" font-size="14.5" text-anchor="end" fill="#d6d6d6">0.32</text><text x="706.5" y="792.5" font-size="14.5" text-anchor="middle" fill="#d6d6d6">CIE 1931 xy</text></svg>
<div class="a" style="left:862px;top:768px;width:866px;height:215px;background:#000"></div>
<div class="a" style="left:863px;top:769px;width:864px;height:25px;background:linear-gradient(#333 0%,#2e2e2e 50%,#141414 52%,#111 100%)"></div>
<div class="t" style="left:993.2px;width:60px;text-align:center;top:775.2px;font-size:13.5px;color:#f0f0f0;">0</div>
<div class="t" style="left:1063.9px;width:60px;text-align:center;top:775.2px;font-size:13.5px;color:#f0f0f0;">10</div>
<div class="t" style="left:1130.6px;width:60px;text-align:center;top:775.2px;font-size:13.5px;color:#f0f0f0;">20</div>
<div class="t" style="left:1197.4px;width:60px;text-align:center;top:775.2px;font-size:13.5px;color:#f0f0f0;">30</div>
<div class="t" style="left:1264.2px;width:60px;text-align:center;top:775.2px;font-size:13.5px;color:#f0f0f0;">40</div>
<div class="t" style="left:1330.9px;width:60px;text-align:center;top:775.2px;font-size:13.5px;color:#f0f0f0;">50</div>
<div class="t" style="left:1397.7px;width:60px;text-align:center;top:775.2px;font-size:13.5px;color:#f0f0f0;">60</div>
<div class="t" style="left:1464.4px;width:60px;text-align:center;top:775.2px;font-size:13.5px;color:#f0f0f0;">70</div>
<div class="t" style="left:1531.2px;width:60px;text-align:center;top:775.2px;font-size:13.5px;color:#f0f0f0;">80</div>
<div class="t" style="left:1598.0px;width:60px;text-align:center;top:775.2px;font-size:13.5px;color:#f0f0f0;">90</div>
<div class="t" style="left:1664.7px;width:60px;text-align:center;top:775.2px;font-size:13.5px;color:#f0f0f0;">100</div>
<div class="a" style="left:863px;top:794.0px;width:864px;height:23.6px;background:#424242"></div>
<div class="t" style="left:872.5px;top:801.1px;font-size:13px;color:#f4f4f4;font-weight:bold;letter-spacing:-0.2px">x: CIE31</div>
<div class="t" style="left:989.5px;top:800.5px;font-size:13.7px;color:#f0f0f0;letter-spacing:-0.4px">0.2674</div>
<div class="t" style="left:1064.0px;top:800.5px;font-size:13.7px;color:#f0f0f0;letter-spacing:-0.4px">0.3056</div>
<div class="t" style="left:1130.8px;top:800.5px;font-size:13.7px;color:#f0f0f0;letter-spacing:-0.4px">0.3077</div>
<div class="t" style="left:1197.5px;top:800.5px;font-size:13.7px;color:#f0f0f0;letter-spacing:-0.4px">0.3079</div>
<div class="t" style="left:1264.3px;top:800.5px;font-size:13.7px;color:#f0f0f0;letter-spacing:-0.4px">0.3079</div>
<div class="t" style="left:1331.0px;top:800.5px;font-size:13.7px;color:#f0f0f0;letter-spacing:-0.4px">0.3080</div>
<div class="t" style="left:1397.8px;top:800.5px;font-size:13.7px;color:#f0f0f0;letter-spacing:-0.4px">0.3081</div>
<div class="t" style="left:1464.6px;top:800.5px;font-size:13.7px;color:#f0f0f0;letter-spacing:-0.4px">0.3083</div>
<div class="t" style="left:1531.3px;top:800.5px;font-size:13.7px;color:#f0f0f0;letter-spacing:-0.4px">0.3086</div>
<div class="t" style="left:1598.1px;top:800.5px;font-size:13.7px;color:#f0f0f0;letter-spacing:-0.4px">0.3092</div>
<div class="t" style="left:1664.8px;top:800.5px;font-size:13.7px;color:#f0f0f0;letter-spacing:-0.4px">0.3108</div>
<div class="a" style="left:863px;top:817.6px;width:864px;height:23.6px;background:#808080"></div>
<div class="t" style="left:872.5px;top:824.7px;font-size:13px;color:#f4f4f4;font-weight:bold;letter-spacing:-0.2px">y: CIE31</div>
<div class="t" style="left:989.5px;top:824.1px;font-size:13.7px;color:#f0f0f0;letter-spacing:-0.4px">0.2819</div>
<div class="t" style="left:1064.0px;top:824.1px;font-size:13.7px;color:#f0f0f0;letter-spacing:-0.4px">0.3308</div>
<div class="t" style="left:1130.8px;top:824.1px;font-size:13.7px;color:#f0f0f0;letter-spacing:-0.4px">0.3358</div>
<div class="t" style="left:1197.5px;top:824.1px;font-size:13.7px;color:#f0f0f0;letter-spacing:-0.4px">0.3372</div>
<div class="t" style="left:1264.3px;top:824.1px;font-size:13.7px;color:#f0f0f0;letter-spacing:-0.4px">0.3368</div>
<div class="t" style="left:1331.0px;top:824.1px;font-size:13.7px;color:#f0f0f0;letter-spacing:-0.4px">0.3355</div>
<div class="t" style="left:1397.8px;top:824.1px;font-size:13.7px;color:#f0f0f0;letter-spacing:-0.4px">0.3339</div>
<div class="t" style="left:1464.6px;top:824.1px;font-size:13.7px;color:#f0f0f0;letter-spacing:-0.4px">0.3324</div>
<div class="t" style="left:1531.3px;top:824.1px;font-size:13.7px;color:#f0f0f0;letter-spacing:-0.4px">0.3310</div>
<div class="t" style="left:1598.1px;top:824.1px;font-size:13.7px;color:#f0f0f0;letter-spacing:-0.4px">0.3298</div>
<div class="t" style="left:1664.8px;top:824.1px;font-size:13.7px;color:#f0f0f0;letter-spacing:-0.4px">0.3293</div>
<div class="a" style="left:863px;top:841.2px;width:864px;height:23.6px;background:#424242"></div>
<div class="t" style="left:872.5px;top:848.3px;font-size:13px;color:#f4f4f4;font-weight:bold;letter-spacing:-0.2px">Y</div>
<div class="t" style="left:989.5px;top:847.7px;font-size:13.7px;color:#f0f0f0;letter-spacing:-0.4px">0.2246</div>
<div class="t" style="left:1064.0px;top:847.7px;font-size:13.7px;color:#f0f0f0;letter-spacing:-0.4px">3.2872</div>
<div class="t" style="left:1130.8px;top:847.7px;font-size:13.7px;color:#f0f0f0;letter-spacing:-0.4px">14.3131</div>
<div class="t" style="left:1197.5px;top:847.7px;font-size:13.7px;color:#f0f0f0;letter-spacing:-0.4px">34.3597</div>
<div class="t" style="left:1264.3px;top:847.7px;font-size:13.7px;color:#f0f0f0;letter-spacing:-0.4px">65.8269</div>
<div class="t" style="left:1331.0px;top:847.7px;font-size:13.7px;color:#f0f0f0;letter-spacing:-0.4px">108.2039</div>
<div class="t" style="left:1397.8px;top:847.7px;font-size:13.7px;color:#f0f0f0;letter-spacing:-0.4px">155.9365</div>
<div class="t" style="left:1464.6px;top:847.7px;font-size:13.7px;color:#f0f0f0;letter-spacing:-0.4px">212.9479</div>
<div class="t" style="left:1531.3px;top:847.7px;font-size:13.7px;color:#f0f0f0;letter-spacing:-0.4px">284.6768</div>
<div class="t" style="left:1598.1px;top:847.7px;font-size:13.7px;color:#f0f0f0;letter-spacing:-0.4px">372.5769</div>
<div class="t" style="left:1664.8px;top:847.7px;font-size:13.7px;color:#f0f0f0;letter-spacing:-0.4px">464.8883</div>
<div class="a" style="left:863px;top:864.8px;width:864px;height:23.6px;background:#808080"></div>
<div class="t" style="left:872.5px;top:871.9px;font-size:13px;color:#f4f4f4;font-weight:bold;letter-spacing:-0.2px">Target Y</div>
<div class="t" style="left:989.5px;top:871.3px;font-size:13.7px;color:#f0f0f0;letter-spacing:-0.4px">0.0000</div>
<div class="t" style="left:1064.0px;top:871.3px;font-size:13.7px;color:#f0f0f0;letter-spacing:-0.4px">3.0613</div>
<div class="t" style="left:1130.8px;top:871.3px;font-size:13.7px;color:#f0f0f0;letter-spacing:-0.4px">13.4777</div>
<div class="t" style="left:1197.5px;top:871.3px;font-size:13.7px;color:#f0f0f0;letter-spacing:-0.4px">32.4153</div>
<div class="t" style="left:1264.3px;top:871.3px;font-size:13.7px;color:#f0f0f0;letter-spacing:-0.4px">61.9271</div>
<div class="t" style="left:1331.0px;top:871.3px;font-size:13.7px;color:#f0f0f0;letter-spacing:-0.4px">102.0521</div>
<div class="t" style="left:1397.8px;top:871.3px;font-size:13.7px;color:#f0f0f0;letter-spacing:-0.4px">151.1059</div>
<div class="t" style="left:1464.6px;top:871.3px;font-size:13.7px;color:#f0f0f0;letter-spacing:-0.4px">210.8066</div>
<div class="t" style="left:1531.3px;top:871.3px;font-size:13.7px;color:#f0f0f0;letter-spacing:-0.4px">284.5421</div>
<div class="t" style="left:1598.1px;top:871.3px;font-size:13.7px;color:#f0f0f0;letter-spacing:-0.4px">370.4772</div>
<div class="t" style="left:1664.8px;top:871.3px;font-size:13.7px;color:#f0f0f0;letter-spacing:-0.4px">464.8883</div>
<div class="a" style="left:863px;top:888.4px;width:864px;height:23.6px;background:#424242"></div>
<div class="t" style="left:872.5px;top:895.5px;font-size:13px;color:#f4f4f4;font-weight:bold;letter-spacing:-0.2px">Gamma Log/Log</div>
<div class="t" style="left:989.5px;top:894.9px;font-size:13.7px;color:#f0f0f0;letter-spacing:-0.4px">2.2000</div>
<div class="t" style="left:1064.0px;top:894.9px;font-size:13.7px;color:#f0f0f0;letter-spacing:-0.4px">2.1688</div>
<div class="t" style="left:1130.8px;top:894.9px;font-size:13.7px;color:#f0f0f0;letter-spacing:-0.4px">2.1626</div>
<div class="t" style="left:1197.5px;top:894.9px;font-size:13.7px;color:#f0f0f0;letter-spacing:-0.4px">2.1519</div>
<div class="t" style="left:1264.3px;top:894.9px;font-size:13.7px;color:#f0f0f0;letter-spacing:-0.4px">2.1334</div>
<div class="t" style="left:1331.0px;top:894.9px;font-size:13.7px;color:#f0f0f0;letter-spacing:-0.4px">2.1151</div>
<div class="t" style="left:1397.8px;top:894.9px;font-size:13.7px;color:#f0f0f0;letter-spacing:-0.4px">2.1384</div>
<div class="t" style="left:1464.6px;top:894.9px;font-size:13.7px;color:#f0f0f0;letter-spacing:-0.4px">2.1719</div>
<div class="t" style="left:1531.3px;top:894.9px;font-size:13.7px;color:#f0f0f0;letter-spacing:-0.4px">2.1979</div>
<div class="t" style="left:1598.1px;top:894.9px;font-size:13.7px;color:#f0f0f0;letter-spacing:-0.4px">2.1452</div>
<div class="t" style="left:1664.8px;top:894.9px;font-size:13.7px;color:#f0f0f0;letter-spacing:-0.4px">2.2000</div>
<div class="a" style="left:863px;top:912.0px;width:864px;height:23.6px;background:#808080"></div>
<div class="t" style="left:872.5px;top:919.1px;font-size:13px;color:#f4f4f4;font-weight:bold;letter-spacing:-0.2px">CCT</div>
<div class="t" style="left:989.5px;top:918.5px;font-size:13.7px;color:#f0f0f0;letter-spacing:-0.4px">11864.0000</div>
<div class="t" style="left:1064.0px;top:918.5px;font-size:13.7px;color:#f0f0f0;letter-spacing:-0.4px">6883.0000</div>
<div class="t" style="left:1130.8px;top:918.5px;font-size:13.7px;color:#f0f0f0;letter-spacing:-0.4px">6722.0000</div>
<div class="t" style="left:1197.5px;top:918.5px;font-size:13.7px;color:#f0f0f0;letter-spacing:-0.4px">6697.0000</div>
<div class="t" style="left:1264.3px;top:918.5px;font-size:13.7px;color:#f0f0f0;letter-spacing:-0.4px">6702.0000</div>
<div class="t" style="left:1331.0px;top:918.5px;font-size:13.7px;color:#f0f0f0;letter-spacing:-0.4px">6709.0000</div>
<div class="t" style="left:1397.8px;top:918.5px;font-size:13.7px;color:#f0f0f0;letter-spacing:-0.4px">6713.0000</div>
<div class="t" style="left:1464.6px;top:918.5px;font-size:13.7px;color:#f0f0f0;letter-spacing:-0.4px">6717.0000</div>
<div class="t" style="left:1531.3px;top:918.5px;font-size:13.7px;color:#f0f0f0;letter-spacing:-0.4px">6711.0000</div>
<div class="t" style="left:1598.1px;top:918.5px;font-size:13.7px;color:#f0f0f0;letter-spacing:-0.4px">6691.0000</div>
<div class="t" style="left:1664.8px;top:918.5px;font-size:13.7px;color:#f0f0f0;letter-spacing:-0.4px">6607.0000</div>
<div class="a" style="left:863px;top:935.6px;width:864px;height:23.6px;background:#424242"></div>
<div class="t" style="left:872.5px;top:942.7px;font-size:13px;color:#f4f4f4;font-weight:bold;letter-spacing:-0.2px">ΔE 2000</div>
<div class="t" style="left:989.5px;top:942.1px;font-size:13.7px;color:#f0f0f0;letter-spacing:-0.4px">0.4298</div>
<div class="t" style="left:1064.0px;top:942.1px;font-size:13.7px;color:#f0f0f0;letter-spacing:-0.4px">1.1609</div>
<div class="t" style="left:1130.8px;top:942.1px;font-size:13.7px;color:#f0f0f0;letter-spacing:-0.4px">2.7764</div>
<div class="t" style="left:1197.5px;top:942.1px;font-size:13.7px;color:#f0f0f0;letter-spacing:-0.4px">3.9832</div>
<div class="t" style="left:1264.3px;top:942.1px;font-size:13.7px;color:#f0f0f0;letter-spacing:-0.4px">4.7594</div>
<div class="t" style="left:1331.0px;top:942.1px;font-size:13.7px;color:#f0f0f0;letter-spacing:-0.4px">5.0170</div>
<div class="t" style="left:1397.8px;top:942.1px;font-size:13.7px;color:#f0f0f0;letter-spacing:-0.4px">4.6928</div>
<div class="t" style="left:1464.6px;top:942.1px;font-size:13.7px;color:#f0f0f0;letter-spacing:-0.4px">4.2868</div>
<div class="t" style="left:1531.3px;top:942.1px;font-size:13.7px;color:#f0f0f0;letter-spacing:-0.4px">3.7076</div>
<div class="t" style="left:1598.1px;top:942.1px;font-size:13.7px;color:#f0f0f0;letter-spacing:-0.4px">2.9530</div>
<div class="t" style="left:1664.8px;top:942.1px;font-size:13.7px;color:#f0f0f0;letter-spacing:-0.4px">1.7286</div>
<div class="a" style="left:863px;top:959.2px;width:864px;height:23.6px;background:#808080"></div>
<div class="t" style="left:872.5px;top:966.3px;font-size:13px;color:#f4f4f4;font-weight:bold;letter-spacing:-0.2px">ΔE ITP</div>
<div class="t" style="left:989.5px;top:965.7px;font-size:13.7px;color:#f0f0f0;letter-spacing:-0.4px">63.3730</div>
<div class="t" style="left:1064.0px;top:965.7px;font-size:13.7px;color:#f0f0f0;letter-spacing:-0.4px">4.6457</div>
<div class="t" style="left:1130.8px;top:965.7px;font-size:13.7px;color:#f0f0f0;letter-spacing:-0.4px">5.6262</div>
<div class="t" style="left:1197.5px;top:965.7px;font-size:13.7px;color:#f0f0f0;letter-spacing:-0.4px">6.4386</div>
<div class="t" style="left:1264.3px;top:965.7px;font-size:13.7px;color:#f0f0f0;letter-spacing:-0.4px">6.8284</div>
<div class="t" style="left:1331.0px;top:965.7px;font-size:13.7px;color:#f0f0f0;letter-spacing:-0.4px">6.5761</div>
<div class="t" style="left:1397.8px;top:965.7px;font-size:13.7px;color:#f0f0f0;letter-spacing:-0.4px">5.1062</div>
<div class="t" style="left:1464.6px;top:965.7px;font-size:13.7px;color:#f0f0f0;letter-spacing:-0.4px">4.1013</div>
<div class="t" style="left:1531.3px;top:965.7px;font-size:13.7px;color:#f0f0f0;letter-spacing:-0.4px">3.3877</div>
<div class="t" style="left:1598.1px;top:965.7px;font-size:13.7px;color:#f0f0f0;letter-spacing:-0.4px">2.6721</div>
<div class="t" style="left:1664.8px;top:965.7px;font-size:13.7px;color:#f0f0f0;letter-spacing:-0.4px">1.4409</div>
<div class="a" style="left:226.1px;top:1076px;width:118.5px;height:69px;border-radius:6px 6px 0 0;background:linear-gradient(#a8a8a8 0%,#8a8a8a 40%,#6a6a6a 70%,#5a5a5a 100%)"></div>
<div class="a" style="left:232.1px;top:1081.6px;width:107px;height:40.7px;border-radius:5px;background:rgb(0,0,0);box-shadow:inset 0 1px 2px rgba(0,0,0,0.4)"></div>
<div class="t" style="left:235.4px;width:100px;text-align:center;top:1129.5px;font-size:12.5px;color:#262626;font-weight:bold">0</div>
<div class="a" style="left:346.9px;top:1076px;width:118.5px;height:69px;border-radius:6px 6px 0 0;background:linear-gradient(#a8a8a8 0%,#8a8a8a 40%,#6a6a6a 70%,#5a5a5a 100%)"></div>
<div class="a" style="left:352.9px;top:1081.6px;width:107px;height:40.7px;border-radius:5px;background:rgb(26,26,26);box-shadow:inset 0 1px 2px rgba(0,0,0,0.4)"></div>
<div class="t" style="left:356.2px;width:100px;text-align:center;top:1129.5px;font-size:12.5px;color:#262626;font-weight:bold">10</div>
<div class="a" style="left:467.7px;top:1076px;width:118.5px;height:69px;border-radius:6px 6px 0 0;background:linear-gradient(#a8a8a8 0%,#8a8a8a 40%,#6a6a6a 70%,#5a5a5a 100%)"></div>
<div class="a" style="left:473.7px;top:1081.6px;width:107px;height:40.7px;border-radius:5px;background:rgb(51,51,51);box-shadow:inset 0 1px 2px rgba(0,0,0,0.4)"></div>
<div class="t" style="left:477.0px;width:100px;text-align:center;top:1129.5px;font-size:12.5px;color:#262626;font-weight:bold">20</div>
<div class="a" style="left:588.6px;top:1076px;width:118.5px;height:69px;border-radius:6px 6px 0 0;background:linear-gradient(#a8a8a8 0%,#8a8a8a 40%,#6a6a6a 70%,#5a5a5a 100%)"></div>
<div class="a" style="left:594.6px;top:1081.6px;width:107px;height:40.7px;border-radius:5px;background:rgb(76,76,76);box-shadow:inset 0 1px 2px rgba(0,0,0,0.4)"></div>
<div class="t" style="left:597.8px;width:100px;text-align:center;top:1129.5px;font-size:12.5px;color:#262626;font-weight:bold">30</div>
<div class="a" style="left:709.4px;top:1076px;width:118.5px;height:69px;border-radius:6px 6px 0 0;background:linear-gradient(#a8a8a8 0%,#8a8a8a 40%,#6a6a6a 70%,#5a5a5a 100%)"></div>
<div class="a" style="left:715.4px;top:1081.6px;width:107px;height:40.7px;border-radius:5px;background:rgb(102,102,102);box-shadow:inset 0 1px 2px rgba(0,0,0,0.4)"></div>
<div class="t" style="left:718.6px;width:100px;text-align:center;top:1129.5px;font-size:12.5px;color:#262626;font-weight:bold">40</div>
<div class="a" style="left:830.2px;top:1076px;width:118.5px;height:69px;border-radius:6px 6px 0 0;background:linear-gradient(#a8a8a8 0%,#8a8a8a 40%,#6a6a6a 70%,#5a5a5a 100%)"></div>
<div class="a" style="left:836.2px;top:1081.6px;width:107px;height:40.7px;border-radius:5px;background:rgb(128,128,128);box-shadow:inset 0 1px 2px rgba(0,0,0,0.4)"></div>
<div class="t" style="left:839.4px;width:100px;text-align:center;top:1129.5px;font-size:12.5px;color:#262626;font-weight:bold">50</div>
<div class="a" style="left:951.0px;top:1076px;width:118.5px;height:69px;border-radius:6px 6px 0 0;background:linear-gradient(#a8a8a8 0%,#8a8a8a 40%,#6a6a6a 70%,#5a5a5a 100%)"></div>
<div class="a" style="left:957.0px;top:1081.6px;width:107px;height:40.7px;border-radius:5px;background:rgb(153,153,153);box-shadow:inset 0 1px 2px rgba(0,0,0,0.4)"></div>
<div class="t" style="left:960.3px;width:100px;text-align:center;top:1129.5px;font-size:12.5px;color:#262626;font-weight:bold">60</div>
<div class="a" style="left:1071.8px;top:1076px;width:118.5px;height:69px;border-radius:6px 6px 0 0;background:linear-gradient(#a8a8a8 0%,#8a8a8a 40%,#6a6a6a 70%,#5a5a5a 100%)"></div>
<div class="a" style="left:1077.8px;top:1081.6px;width:107px;height:40.7px;border-radius:5px;background:rgb(178,178,178);box-shadow:inset 0 1px 2px rgba(0,0,0,0.4)"></div>
<div class="t" style="left:1081.1px;width:100px;text-align:center;top:1129.5px;font-size:12.5px;color:#262626;font-weight:bold">70</div>
<div class="a" style="left:1192.7px;top:1076px;width:118.5px;height:69px;border-radius:6px 6px 0 0;background:linear-gradient(#a8a8a8 0%,#8a8a8a 40%,#6a6a6a 70%,#5a5a5a 100%)"></div>
<div class="a" style="left:1198.7px;top:1081.6px;width:107px;height:40.7px;border-radius:5px;background:rgb(204,204,204);box-shadow:inset 0 1px 2px rgba(0,0,0,0.4)"></div>
<div class="t" style="left:1201.9px;width:100px;text-align:center;top:1129.5px;font-size:12.5px;color:#262626;font-weight:bold">80</div>
<div class="a" style="left:1313.5px;top:1076px;width:118.5px;height:69px;border-radius:6px 6px 0 0;background:linear-gradient(#a8a8a8 0%,#8a8a8a 40%,#6a6a6a 70%,#5a5a5a 100%)"></div>
<div class="a" style="left:1319.5px;top:1081.6px;width:107px;height:40.7px;border-radius:5px;background:rgb(230,230,230);box-shadow:inset 0 1px 2px rgba(0,0,0,0.4)"></div>
<div class="t" style="left:1322.7px;width:100px;text-align:center;top:1129.5px;font-size:12.5px;color:#262626;font-weight:bold">90</div>
<div class="a" style="left:1434.3px;top:1076px;width:119px;height:69px;border-radius:6px 6px 0 0;background:linear-gradient(#1f1f1f,#333)"></div>
<div class="a" style="left:1440.3px;top:1081.6px;width:107px;height:40.7px;border-radius:5px;background:#fff"></div>
<div class="t" style="left:1443.8px;width:100px;text-align:center;top:1129.6px;font-size:13px;color:#fff;font-weight:bold">100</div>
<div class="a" style="left:1557px;top:1076px;width:53px;height:20px;border-radius:5px 5px 0 0;background:linear-gradient(#9c9c9c,#7a7a7a)"></div>
<div class="a" style="left:1557px;top:1096px;width:53px;height:2px;background:#555"></div>
<div class="a" style="left:1557px;top:1098px;width:53px;height:47px;background:linear-gradient(#9a9a9a,#6a6a6a)"></div>
<div class="a" style="left:1575px;top:1078px;width:17px;height:17px;border-radius:50%;background:radial-gradient(#707070,#8a8a8a)"></div>
<svg class="a" style="left:1578px;top:1082px" width="12" height="7"><path d="M0 7H12L6 0Z" fill="#222"/></svg>
<div class="a" style="left:1566.7px;top:1104px;width:34px;height:34px;border-radius:5px;border:2.5px solid #1e1e1e;background:linear-gradient(#a2a2a2 55%,#7e7e7e 55%)"></div>
<div class="a" style="left:1576px;top:1114px;width:15.5px;height:15.5px;background:linear-gradient(#1c1c1c 50%,#000 50%)"></div>
<div class="a" style="left:1612px;top:1076px;width:306px;height:69px;background:#2a2a2a"></div>
<div class="a" style="left:1612px;top:1076px;width:306px;height:35.5px;border-radius:5px 5px 0 0;background:linear-gradient(#b4b4b4,#7c7c7c)"></div>
<div class="a" style="left:1664.0px;top:1077px;width:1px;height:33px;background:#3a3a3a"></div>
<div class="a" style="left:1714.6px;top:1077px;width:1px;height:33px;background:#3a3a3a"></div>
<div class="a" style="left:1765.0px;top:1077px;width:1px;height:33px;background:#3a3a3a"></div>
<div class="a" style="left:1816.0px;top:1077px;width:1px;height:33px;background:#3a3a3a"></div>
<div class="a" style="left:1866.5px;top:1077px;width:1px;height:33px;background:#3a3a3a"></div>
<div class="a" style="left:1626.0px;top:1082px;width:24px;height:24px;border-radius:50%;background:radial-gradient(circle at 50% 40%,#7e7e7e,#959595 90%)"></div>
<div class="a" style="left:1677.3px;top:1082px;width:24px;height:24px;border-radius:50%;background:radial-gradient(circle at 50% 40%,#7e7e7e,#959595 90%)"></div>
<div class="a" style="left:1727.8px;top:1082px;width:24px;height:24px;border-radius:50%;background:radial-gradient(circle at 50% 40%,#7e7e7e,#959595 90%)"></div>
<div class="a" style="left:1778.5px;top:1082px;width:24px;height:24px;border-radius:50%;background:radial-gradient(circle at 50% 40%,#7e7e7e,#959595 90%)"></div>
<div class="a" style="left:1829.3px;top:1082px;width:24px;height:24px;border-radius:50%;background:radial-gradient(circle at 50% 40%,#7e7e7e,#959595 90%)"></div>
<div class="a" style="left:1880.0px;top:1082px;width:24px;height:24px;border-radius:50%;background:radial-gradient(circle at 50% 40%,#7e7e7e,#959595 90%)"></div>
<svg class="a" style="left:1684px;top:1089px" width="12" height="12"><path d="M1 0L11 6L1 12Z" fill="#222"/></svg>
<svg class="a" style="left:1732px;top:1087px" width="16" height="14"><path d="M4 1H1V13H4M12 1H15V13H12" fill="none" stroke="#222" stroke-width="1.5"/><path d="M6 10h1M8 10h1M10 10h1" stroke="#222"/></svg>
<svg class="a" style="left:1782px;top:1089px" width="18" height="10"><path d="M9 5C6 1 2 1 2 5S6 9 9 5S16 1 16 5S12 9 9 5" fill="none" stroke="#222" stroke-width="1.6"/></svg>
<svg class="a" style="left:1834px;top:1086px" width="16" height="14"><path d="M3 12A6 6 0 0 1 12 4" fill="none" stroke="#222" stroke-width="1.8"/><path d="M10 1L15 4L10 7Z" fill="#222"/></svg>
<svg class="a" style="left:1632px;top:1089px" width="12" height="12"><rect x="1" y="1" width="7" height="7" fill="#111"/></svg>
<div class="a" style="left:1612px;top:1111.5px;width:306px;height:33.5px;border-radius:4px 4px 0 0;background:linear-gradient(#b6b6b6,#8c8c8c)"></div>
<div class="a" style="left:1765px;top:1111.5px;width:1px;height:33.5px;background:#3a3a3a"></div>
<div class="t" style="left:1677.0px;top:1116.0px;font-size:24.5px;color:#262626;letter-spacing:0.3px">Back</div>
<div class="t" style="left:1797.0px;top:1116.0px;font-size:24.5px;color:#262626;letter-spacing:1.5px">Next</div>
<div class="a" style="left:1875px;top:1116px;width:24px;height:24px;border-radius:50%;background:radial-gradient(circle at 50% 40%,#888,#a0a0a0 90%)"></div>
<svg class="a" style="left:1881px;top:1122px" width="12" height="12"><path d="M1 1L5.5 6L1 11M6 1L10.5 6L6 11" fill="none" stroke="#2a2a2a" stroke-width="1.8"/></svg>
<div class="a" style="left:1626px;top:1116px;width:24px;height:24px;border-radius:50%;background:radial-gradient(circle at 50% 40%,#888,#a0a0a0 90%)"></div>
<svg class="a" style="left:1632px;top:1122px" width="12" height="12"><path d="M11 1L6.5 6L11 11M6 1L1.5 6L6 11" fill="none" stroke="#2a2a2a" stroke-width="1.8"/></svg>
<svg class="a" style="left:1600px;top:1070px" width="320" height="76" font-family="Liberation Sans, sans-serif">
<g opacity="0.78" style="filter:blur(0.3px)">
<path d="M31.2 14.5 L69.2 21.6 L70.4 44.5 L40.8 47.4" fill="none" stroke="#eee" stroke-width="5" stroke-linejoin="round" stroke-linecap="round"/>
<path d="M31.2 14.5 L33.3 51.2 L55.8 62 L97.5 50.3 L75 45.75" fill="none" stroke="#eee" stroke-width="5" stroke-linejoin="round" stroke-linecap="round"/>
<path d="M31.2 14.5 L69.2 21.6 L70.4 44.5 L40.8 47.4" fill="none" stroke="#a8353c" stroke-width="2.8" stroke-linejoin="round" stroke-linecap="round"/>
<path d="M31.2 14.5 L33.3 51.2 L55.8 62 L97.5 50.3 L75 45.75" fill="none" stroke="#a8353c" stroke-width="2.8" stroke-linejoin="round" stroke-linecap="round"/>
<path d="M41.5 27 Q45 22.5 49.5 24.5 L55.5 32 L73 13 Q75.5 12.5 75 15 L56.5 42 L52.5 42.5 Z" fill="#3a3a3a" stroke="#eee" stroke-width="1.6" stroke-linejoin="round"/>
<text x="75" y="42.8" font-size="26.3" font-weight="bold" fill="none" stroke="#f0f0f0" stroke-width="2.6" letter-spacing="-0.6">NOTEBOOK</text>
<text x="75" y="42.8" font-size="26.3" font-weight="bold" fill="#a8353c" letter-spacing="-0.6">NOTEBOOK</text>
<text x="224" y="42.8" font-size="26.3" fill="none" stroke="#f0f0f0" stroke-width="3" letter-spacing="-1">CHECK</text>
<text x="224" y="42.8" font-size="26.3" fill="#3a3a3a" stroke="#3a3a3a" stroke-width="0.5" letter-spacing="-1">CHECK</text>
</g>
</svg>
<div class="a" style="left:0;top:1145px;width:1920px;height:1px;background:repeating-linear-gradient(90deg,#ddd 0 1px,#444 1px 2px)"></div>
<div class="a" style="left:0;top:25px;width:1920px;height:2px;background:repeating-linear-gradient(90deg,rgba(235,235,235,0.8) 0 1.7px,rgba(0,0,0,0.25) 1.7px 3.4px)"></div>
</body></html>
